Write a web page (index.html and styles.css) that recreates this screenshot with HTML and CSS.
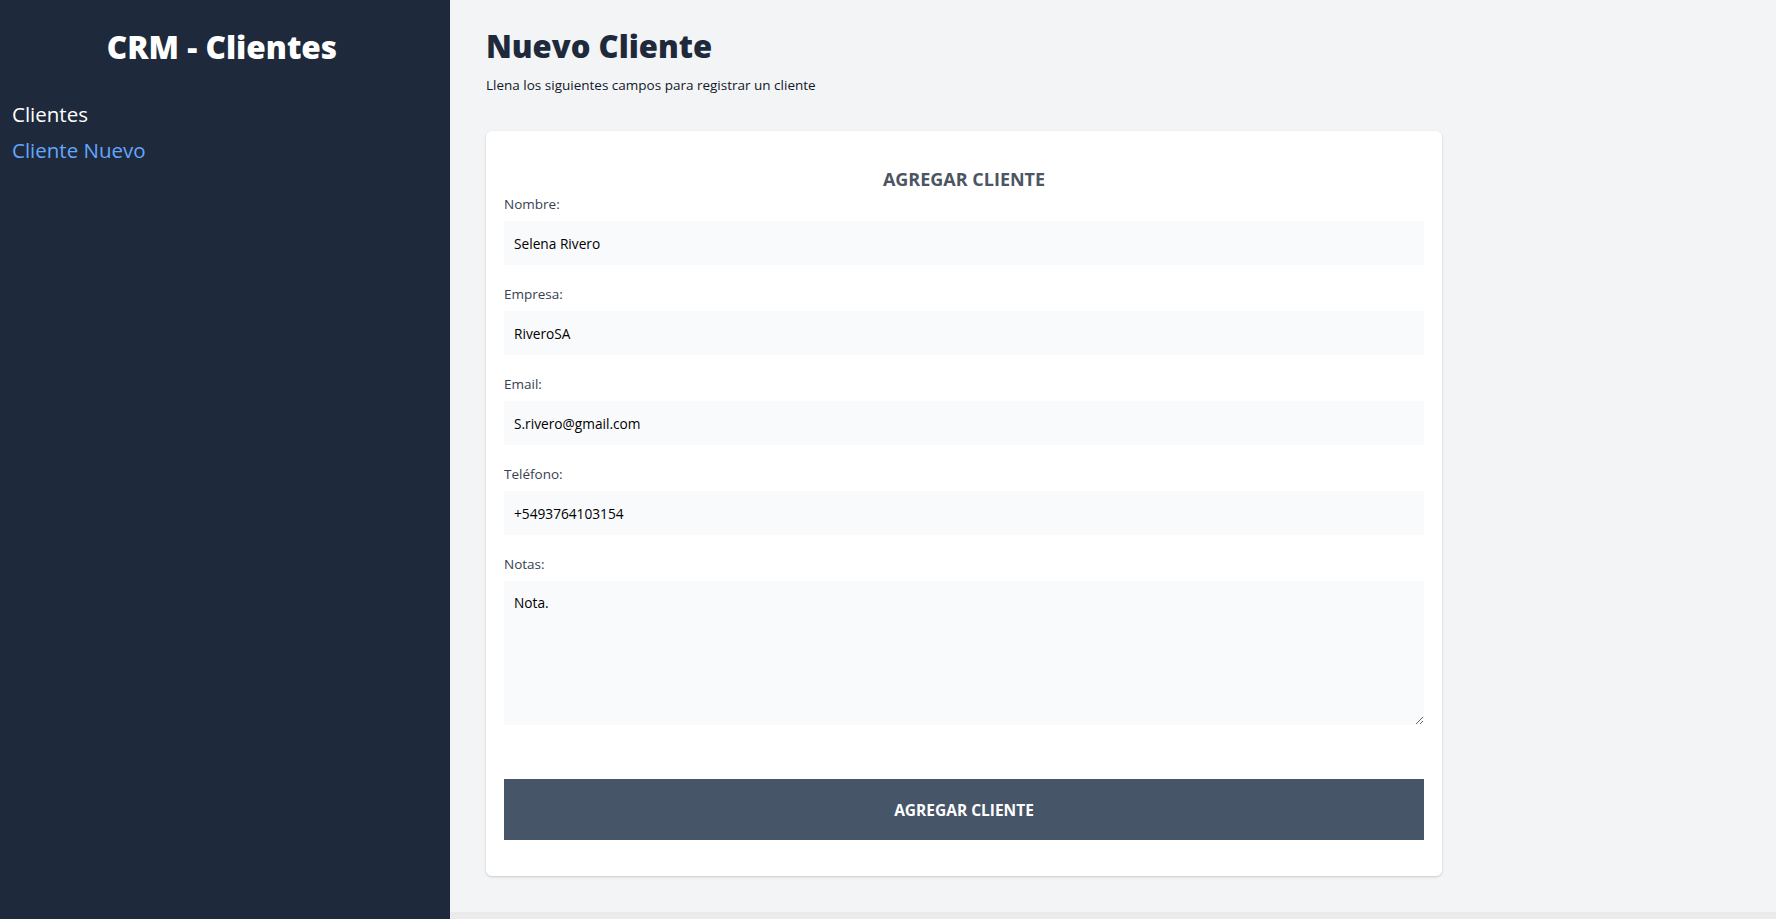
FILE: index.html
```html
<!DOCTYPE html>
<html lang="es">
<head>
<meta charset="utf-8">
<title>CRM - Clientes</title>
<link rel="stylesheet" href="styles.css">
</head>
<body>
<div class="layout">
  <aside class="sidebar">
    <h2 class="brand">CRM - Clientes</h2>
    <nav class="nav">
      <a class="nav-link" href="#">Clientes</a>
      <a class="nav-link active" href="#">Cliente Nuevo</a>
    </nav>
  </aside>
  <main class="main">
    <div class="main-content">
      <h1 class="page-title">Nuevo Cliente</h1>
      <p class="page-subtitle">Llena los siguientes campos para registrar un cliente</p>
      <div class="card">
        <form class="form">
          <legend class="form-title">Agregar Cliente</legend>
          <div class="field">
            <label class="label" for="nombre">Nombre:</label>
            <input class="input" id="nombre" type="text" value="Selena Rivero">
          </div>
          <div class="field">
            <label class="label" for="empresa">Empresa:</label>
            <input class="input" id="empresa" type="text" value="RiveroSA">
          </div>
          <div class="field">
            <label class="label" for="email">Email:</label>
            <input class="input" id="email" type="email" value="S.rivero@gmail.com">
          </div>
          <div class="field">
            <label class="label" for="telefono">Teléfono:</label>
            <input class="input" id="telefono" type="tel" value="+5493764103154">
          </div>
          <div class="field">
            <label class="label" for="notas">Notas:</label>
            <textarea class="input textarea" id="notas">Nota.</textarea>
          </div>
          <button class="submit" type="button">Agregar Cliente</button>
        </form>
      </div>
    </div>
    <div class="hscroll"></div>
  </main>
</div>
</body>
</html>
```
FILE: styles.css
```css
* { box-sizing: border-box; }
html, body { margin: 0; padding: 0; height: 100%; }
body {
  font-family: "Open Sans", "Noto Sans", sans-serif;
  color: #111827;
}
.layout {
  display: flex;
  height: 100vh;
  overflow: hidden;
}
.sidebar {
  width: 450px;
  flex: none;
  background: #1e293b;
  padding: 27px 18px 27px 12px;
}
.brand {
  margin: 0;
  text-align: center;
  color: #fff;
  font-size: 31.5px;
  line-height: 40px;
  font-weight: 800;
}
.nav {
  display: flex;
  flex-direction: column;
  gap: 4px;
  margin-top: 31px;
}
.nav-link {
  color: #fff;
  text-decoration: none;
  font-size: 20.5px;
  line-height: 32px;
}
.nav-link.active { color: #63a7fb; }
.main {
  flex: 1;
  background: #f3f4f6;
  display: flex;
  flex-direction: column;
}
.main-content {
  flex: 1;
  padding: 26px 36px 0;
  overflow: hidden;
}
.page-title {
  margin: 0;
  font-size: 31px;
  line-height: 40px;
  font-weight: 800;
  color: #1e293b;
}
.page-subtitle {
  margin: 9px 0 0;
  font-size: 13.5px;
  line-height: 20px;
  color: #111827;
}
.card {
  width: 956px;
  margin-top: 36px;
  background: #fff;
  border-radius: 6px;
  box-shadow: 0 1px 3px rgba(0,0,0,0.12), 0 1px 2px rgba(0,0,0,0.06);
  padding: 34px 18px 36px;
}
.form { display: flex; flex-direction: column; }
.form-title {
  width: 100%;
  text-align: center;
  text-transform: uppercase;
  font-weight: 700;
  font-size: 18px;
  line-height: 28px;
  color: #4b5563;
  padding: 0;
  margin-bottom: 1px;
}
.field {
  display: flex;
  flex-direction: column;
  margin-bottom: 19px;
}
.label {
  font-size: 13.5px;
  line-height: 20px;
  color: #374151;
  margin-bottom: 7px;
}
.input {
  height: 44px;
  border: none;
  background: #f9fafb;
  padding: 0 10px;
  font-family: inherit;
  font-size: 13.7px;
  color: #000;
  outline: none;
}
.textarea {
  height: 144px;
  padding-top: 12px;
  resize: vertical;
}
.field:last-of-type { margin-bottom: 54px; }
.submit {
  height: 61px;
  border: none;
  background: #475569;
  color: #fff;
  font-family: inherit;
  font-weight: 700;
  font-size: 15.5px;
  text-transform: uppercase;
}
.hscroll {
  height: 7px;
  flex: none;
  background: #ebebeb;
}
```
